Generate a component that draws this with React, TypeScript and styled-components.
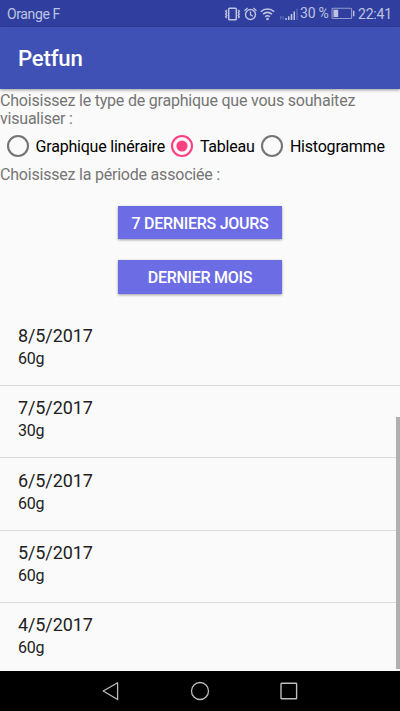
import React, { useState } from 'react';
import styled, { createGlobalStyle } from 'styled-components';

const GlobalStyle = createGlobalStyle`
  * { box-sizing: border-box; }
  body { margin: 0; font-family: Roboto, sans-serif; background: #fafafa; }
`;

const Screen = styled.div`
  width: 400px;
  height: 711px;
  display: flex;
  flex-direction: column;
  overflow: hidden;
  background: #fafafa;
  font-size: 16px;
  letter-spacing: -0.21px;
  line-height: 18px;
`;

const StatusBar = styled.header`
  flex: none;
  height: 26.67px;
  padding: 1px 9.5px 0 7px;
  display: flex;
  align-items: center;
  justify-content: space-between;
  background: #303f9f;
  color: #bec3e1;
`;

const Carrier = styled.span`
  font-size: 14px;
  letter-spacing: -0.38px;
`;

const StatusIcons = styled.div`
  display: flex;
  align-items: center;
  svg { display: block; flex: none; }
`;

const StatusText = styled.span<{ $width: number }>`
  width: ${(p) => p.$width}px;
  font-size: 14px;
  letter-spacing: -0.2px;
  white-space: nowrap;
`;

const BatteryLevel = styled(StatusText)`
  padding-bottom: 2px;
`;

const Gap = styled.span<{ $w: number }>`
  width: ${(p) => p.$w}px;
  flex: none;
`;

const AppBar = styled.div`
  flex: none;
  height: 62.2px;
  padding: 1px 18px 0;
  display: flex;
  align-items: center;
  background: #3f51b5;
  box-shadow: 0 1px 3px rgba(0, 0, 0, 0.4);
  z-index: 1;
`;

const Title = styled.h1`
  margin: 0;
  color: #fff;
  font-size: 22.2px;
  font-weight: 500;
  letter-spacing: -0.2px;
  line-height: 26px;
`;

const Prompt = styled.p`
  margin: 0;
  padding-top: 3.1px;
  color: #757575;
`;

const RadioGroup = styled.div`
  display: flex;
  height: 35.2px;
  align-items: center;
`;

const RadioOption = styled.button<{ $width: number }>`
  width: ${(p) => p.$width}px;
  flex: none;
  display: flex;
  align-items: center;
  border: 0;
  padding: 0 0 0 5.8px;
  gap: 5.8px;
  background: none;
  color: #000;
  font: inherit;
  letter-spacing: inherit;
  white-space: nowrap;
  svg { display: block; flex: none; }
`;

const RadioLabel = styled.span`
  padding-top: 2.2px;
`;

const Periods = styled.div`
  display: flex;
  flex-direction: column;
  align-items: center;
  gap: 21px;
  padding-top: 21.7px;
`;

const PeriodButton = styled.button`
  width: 164.6px;
  height: 33.3px;
  border: 0;
  padding: 2.6px 0 0;
  background: #6c6ce5;
  color: #fff;
  font: 500 16px/18px Roboto, sans-serif;
  letter-spacing: -0.28px;
  text-transform: uppercase;
  box-shadow: 0 1px 2.5px rgba(0, 0, 0, 0.38);
`;

const ListArea = styled.div`
  flex: 1;
  min-height: 0;
  margin-top: 20.6px;
  position: relative;
  overflow: hidden;
`;

const Entry = styled.div`
  height: 72.2px;
  padding: 11.2px 18px 0;
  border-bottom: 1px solid #dadada;
  color: #212121;
`;

const EntryDate = styled.div`
  font-size: 18px;
  letter-spacing: -0.1px;
  line-height: 21px;
`;

const EntryAmount = styled.div`
  margin-top: 3px;
  line-height: 20px;
`;

const ScrollThumb = styled.div`
  position: absolute;
  right: 0;
  bottom: 2px;
  width: 4.4px;
  height: 252.5px;
  background: #b0b0b0;
`;

const NavBar = styled.nav`
  flex: none;
  height: 40px;
  background: #000;
  display: flex;
  justify-content: center;
  gap: 65px;
  align-items: center;
  svg { display: block; }
`;

const VibrateIcon = () => (
  <svg width="17" height="14" viewBox="0 0 17 14" fill="none" stroke="currentColor">
    <rect x="4.7" y="1.3" width="7.6" height="11.4" rx=".8" strokeWidth="1.5" />
    <path d="M2.7 2.8l-1 1.4 1 1.4-1 1.4 1 1.4-1 1.4 1 1.4M14.3 2.8l1 1.4-1 1.4 1 1.4-1 1.4 1 1.4-1 1.4" strokeWidth="1.4" />
  </svg>
);

const AlarmIcon = () => (
  <svg width="13" height="14" viewBox="0 0 13 14" fill="none" stroke="currentColor">
    <circle cx="6.5" cy="7.5" r="5" strokeWidth="1.4" />
    <path d="M6.5 4.4v3.4l2.4 1.4M.5 3.8L3.6 1.1M12.5 3.8L9.4 1.1" strokeWidth="1.3" />
  </svg>
);

const WifiIcon = () => (
  <svg width="15" height="14" viewBox="0 0 15 14" fill="none" stroke="currentColor" strokeWidth="1.6">
    <path d="M.8 4.7a9.6 9.6 0 0 1 13.4 0M3 7.2a6.4 6.4 0 0 1 9 0M5.2 9.7a3.2 3.2 0 0 1 4.6 0" />
    <circle cx="7.5" cy="12" r="1.3" fill="currentColor" stroke="none" />
  </svg>
);

const SignalIcon = () => (
  <svg width="20" height="14" viewBox="0 0 20 14" fill="currentColor">
    <path d="M1.7 8.8l1.3 1.6H2.1v2.4h-.8v-2.4H.5zM4.1 12.8l-1.2-1.6h.8V8.8h.8v2.4h.8z" opacity=".4" />
    <path d="M6.3 11h1.5v2H6.3zM9 9.2h1.5V13H9zM11.7 7h1.6v6h-1.6zM14.5 4.6H16V13h-1.5z" />
    <path d="M17.4 1.8h1.2V13h-1.2z" opacity=".35" />
  </svg>
);

const BatteryIcon = () => (
  <svg width="24" height="14" viewBox="0 0 24 14">
    <rect x="1" y="1.3" width="19.6" height="10.2" rx="1" fill="none" stroke="currentColor" strokeWidth="1.1" opacity=".7" />
    <path d="M2.4 2.7h4.8v7.4H2.4z" fill="currentColor" />
    <path d="M22 3.8h1.4v5.4H22z" fill="currentColor" />
  </svg>
);

const RadioMark = ({ checked }: { checked: boolean }) => {
  const color = checked ? '#ff4081' : '#757575';
  return (
    <svg width="24" height="24" viewBox="0 0 24 24">
      <circle cx="12" cy="12" r="10" fill="none" stroke={color} strokeWidth="2.1" />
      {checked && <circle cx="12" cy="12" r="5.6" fill={color} />}
    </svg>
  );
};

const chartTypes = [
  { label: 'Graphique linéraire', width: 164.3 },
  { label: 'Tableau', width: 90 },
  { label: 'Histogramme', width: 135 },
];

const entries = [
  { date: '8/5/2017', amount: '60g' },
  { date: '7/5/2017', amount: '30g' },
  { date: '6/5/2017', amount: '60g' },
  { date: '5/5/2017', amount: '60g' },
  { date: '4/5/2017', amount: '60g' },
];

export default function App() {
  const [chart, setChart] = useState('Tableau');
  return (
    <>
      <GlobalStyle />
      <Screen>
        <StatusBar>
          <Carrier>Orange F</Carrier>
          <StatusIcons>
            <VibrateIcon />
            <Gap $w={3} />
            <AlarmIcon />
            <Gap $w={3} />
            <WifiIcon />
            <Gap $w={4} />
            <SignalIcon />
            <Gap $w={1} />
            <BatteryLevel $width={31}>30 %</BatteryLevel>
            <BatteryIcon />
            <Gap $w={3} />
            <StatusText $width={32.5}>22:41</StatusText>
          </StatusIcons>
        </StatusBar>
        <AppBar>
          <Title>Petfun</Title>
        </AppBar>
        <Prompt>
          Choisissez le type de graphique que vous souhaitez
          <br />
          visualiser :
        </Prompt>
        <RadioGroup role="radiogroup">
          {chartTypes.map((t) => (
            <RadioOption
              key={t.label}
              $width={t.width}
              role="radio"
              aria-checked={chart === t.label}
              onClick={() => setChart(t.label)}
            >
              <RadioMark checked={chart === t.label} />
              <RadioLabel>{t.label}</RadioLabel>
            </RadioOption>
          ))}
        </RadioGroup>
        <Prompt>Choisissez la période associée :</Prompt>
        <Periods>
          <PeriodButton>7 derniers jours</PeriodButton>
          <PeriodButton>Dernier mois</PeriodButton>
        </Periods>
        <ListArea>
          {entries.map((e) => (
            <Entry key={e.date}>
              <EntryDate>{e.date}</EntryDate>
              <EntryAmount>{e.amount}</EntryAmount>
            </Entry>
          ))}
          <ScrollThumb />
        </ListArea>
        <NavBar>
          <svg width="24" height="24" viewBox="0 0 24 24" fill="none" stroke="#bdbdbd" strokeWidth="1.3" strokeLinejoin="round">
            <path d="M4.2 12L18.6 3.7v16.8z" />
          </svg>
          <svg width="24" height="24" viewBox="0 0 24 24" fill="none" stroke="#bdbdbd" strokeWidth="1.3">
            <circle cx="12" cy="12" r="8.5" />
          </svg>
          <svg width="24" height="24" viewBox="0 0 24 24" fill="none" stroke="#bdbdbd" strokeWidth="1.4">
            <rect x="4" y="4.2" width="15.6" height="15.6" rx=".6" />
          </svg>
        </NavBar>
      </Screen>
    </>
  );
}
